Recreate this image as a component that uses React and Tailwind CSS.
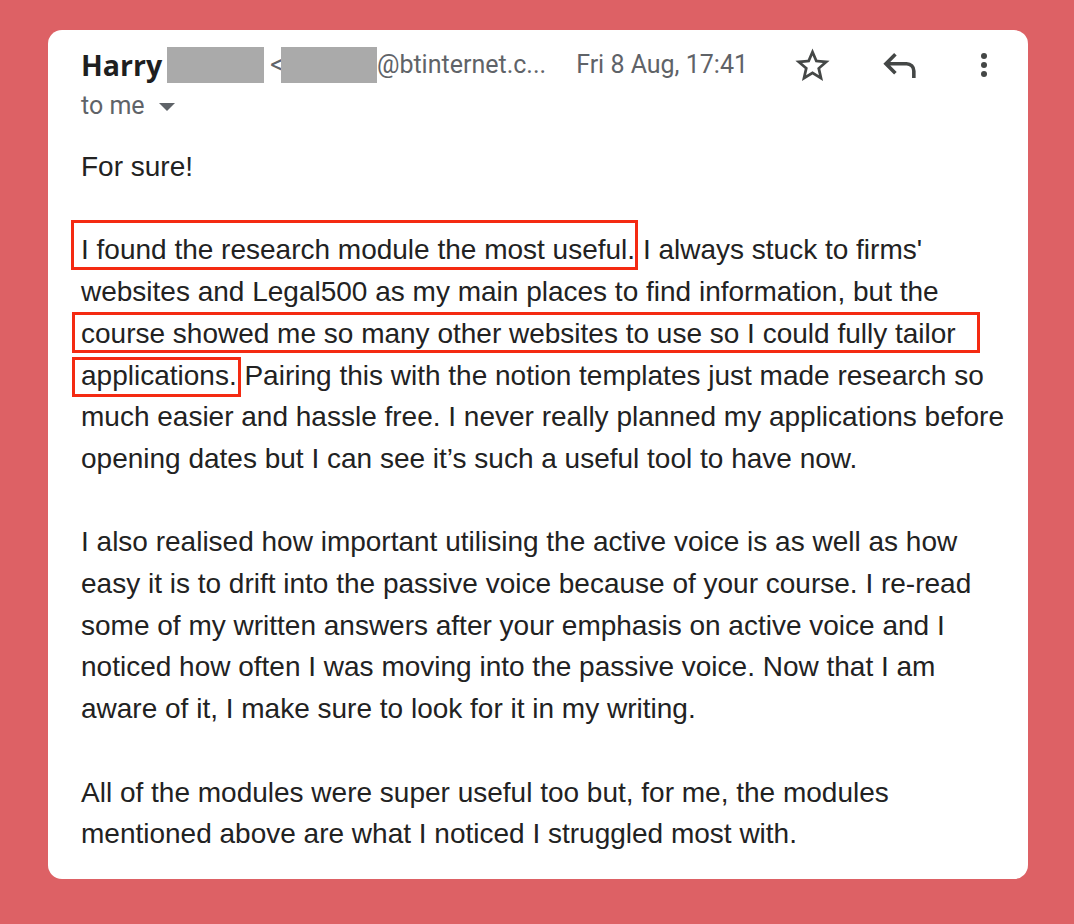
import React from "react";

function Box({ children, cls }) {
  return (
    <span className="relative">
      {children}
      <span className={"pointer-events-none absolute border-[3px] border-[#f42a12] " + cls} />
    </span>
  );
}

export default function App() {
  return (
    <div className="w-[1074px] h-[924px] bg-[#dd6165] pl-[48px] pt-[30px]">
      <div className="w-[980px] bg-white rounded-[14px] pl-[33px] pr-[26px] pt-[15px] pb-[24px]">
        {/* header */}
        <div className="flex items-center h-[40px]">
          <span className="font-['Open_Sans',Arial,sans-serif] font-bold text-[28.5px] leading-[40px] text-[#1f1f1f]">
            Harry
          </span>
          <span className="ml-[5px] w-[97px] h-[36px] bg-[#aaaaaa]" />
          <span className="ml-[6px] font-['Roboto',sans-serif] text-[25px] leading-[40px] text-[#5f6368]">&lt;</span>
          <span className="ml-[-1.5px] w-[95.6px] h-[36px] bg-[#aaaaaa]" />
          <span className="font-['Roboto',sans-serif] text-[25px] leading-[40px] text-[#5f6368]">@btinternet.c...</span>
          <span className="ml-auto font-['Roboto',sans-serif] text-[25px] leading-[40px] text-[#5f6368]">Fri 8 Aug, 17:41</span>
          <svg className="ml-[44px] w-[41px] h-[41px]" viewBox="0 0 24 24" fill="#444746">
            <path d="M22 9.24l-7.19-.62L12 2 9.19 8.63 2 9.24l5.46 4.73L5.82 21 12 17.27 18.18 21l-1.63-7.03L22 9.24zM12 15.4l-3.76 2.27 1-4.28-3.32-2.88 4.38-.38L12 6.1l1.71 4.04 4.38.38-3.32 2.88 1 4.28L12 15.4z" />
          </svg>
          <svg className="ml-[45px] w-[43px] h-[43px]" viewBox="0 -960 960 960" fill="#444746">
            <path d="M760-200v-160q0-50-35-85t-85-35H273l144 144-57 56-240-240 240-240 57 56-144 144h367q83 0 141.5 58.5T840-360v160h-80Z" />
          </svg>
          <svg className="ml-[45px] w-[36px] h-[36px]" viewBox="0 0 24 24" fill="#444746">
            <circle cx="12" cy="6" r="2" />
            <circle cx="12" cy="12" r="2" />
            <circle cx="12" cy="18" r="2" />
          </svg>
        </div>
        <div className="flex items-center h-[36px] mt-[3px]">
          <span className="font-['Roboto',sans-serif] text-[25px] leading-[36px] text-[#5f6368]">to me</span>
          <svg className="ml-[14px] mt-[2px] w-[16px] h-[8px]" viewBox="7 10 10 5" fill="#5f6368">
            <path d="M7 10l5 5 5-5z" />
          </svg>
        </div>

        {/* body */}
        <div className="mt-[22px] font-['Liberation_Sans',Arial,sans-serif] text-[28px] leading-[41.7px] text-[#222222] whitespace-nowrap flex flex-col gap-[41.7px]">
          <p>For sure!</p>
          <p>
            <Box cls="-left-[10.3px] -right-[3px] -top-[14px] -bottom-[5.1px]">I found the research module the most useful.</Box>{" "}
            I always stuck to firms'
            <br />
            websites and Legal500 as my main places to find information, but the
            <br />
            <Box cls="-left-[9.5px] -right-[24px] -top-[5.4px] -bottom-[4.7px]">course showed me so many other websites to use so I could fully tailor</Box>
            <br />
            <Box cls="-left-[9px] -right-[4.7px] -top-[2.8px] -bottom-[6px]">applications.</Box>{" "}
            Pairing this with the notion templates just made research so
            <br />
            much easier and hassle free. I never really planned my applications before
            <br />
            opening dates but I can see it’s such a useful tool to have now.
          </p>
          <p>
            I also realised how important utilising the active voice is as well as how
            <br />
            easy it is to drift into the passive voice because of your course. I re-read
            <br />
            some of my written answers after your emphasis on active voice and I
            <br />
            noticed how often I was moving into the passive voice. Now that I am
            <br />
            aware of it, I make sure to look for it in my writing.
          </p>
          <p>
            All of the modules were super useful too but, for me, the modules
            <br />
            mentioned above are what I noticed I struggled most with.
          </p>
        </div>
      </div>
    </div>
  );
}
